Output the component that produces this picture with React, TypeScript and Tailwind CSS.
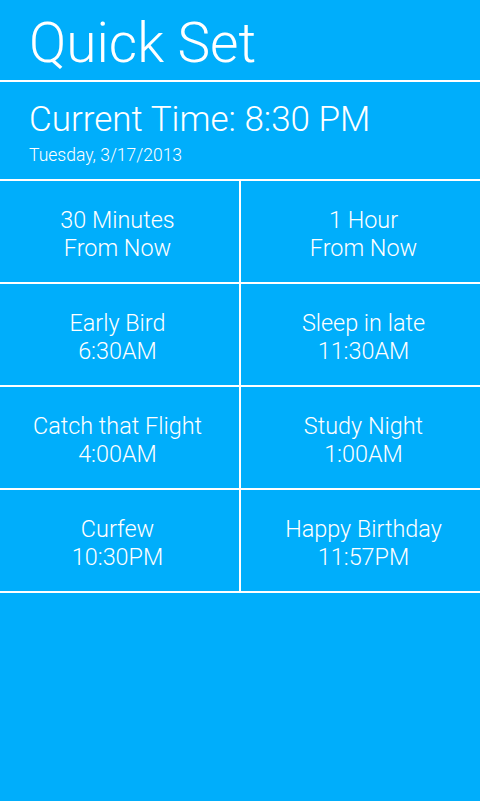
import React from 'react';

const presets = [
  { top: '30 Minutes', bottom: 'From Now' },
  { top: '1 Hour', bottom: 'From Now' },
  { top: 'Early Bird', bottom: '6:30AM' },
  { top: 'Sleep in late', bottom: '11:30AM' },
  { top: 'Catch that Flight', bottom: '4:00AM' },
  { top: 'Study Night', bottom: '1:00AM' },
  { top: 'Curfew', bottom: '10:30PM' },
  { top: 'Happy Birthday', bottom: '11:57PM' },
];

export default function App() {
  return (
    <div
      className="w-[480px] h-[801px] bg-[#00aefb] text-white font-light flex flex-col"
      style={{ fontFamily: '"Roboto Light", Roboto, "Open Sans", sans-serif' }}
    >
      {/* Title */}
      <div className="h-[80px] pl-[29px] flex items-center">
        <h1 className="text-[55px] leading-none font-light mt-[6px]">Quick Set</h1>
      </div>
      <div className="h-[2px] bg-white" />

      {/* Current time */}
      <div className="h-[97px] pl-[29px] pt-[18px]">
        <p className="text-[35px] leading-[40px] font-light">Current Time: 8:30 PM</p>
        <p className="text-[17.5px] leading-[22px] font-light mt-[4px]">Tuesday, 3/17/2013</p>
      </div>
      <div className="h-[2px] bg-white" />

      {/* Presets grid */}
      <div className="grid grid-cols-[239px_2px_239px]">
        {presets.map((p, i) => (
          <React.Fragment key={p.top}>
            {i % 2 === 1 && <div className="bg-white" />}
            <button
              className={
                i % 2 === 0
                  ? 'h-[101px] pt-[5px] pr-[4px] flex flex-col items-center justify-center text-[23.4px] leading-[28px] font-light'
                  : 'h-[101px] pt-[5px] pl-[6px] flex flex-col items-center justify-center text-[23.4px] leading-[28px] font-light'
              }
            >
              <span>{p.top}</span>
              <span>{p.bottom}</span>
            </button>
            {i % 2 === 1 && <div className="col-span-3 h-[2px] bg-white" />}
          </React.Fragment>
        ))}
      </div>
    </div>
  );
}
